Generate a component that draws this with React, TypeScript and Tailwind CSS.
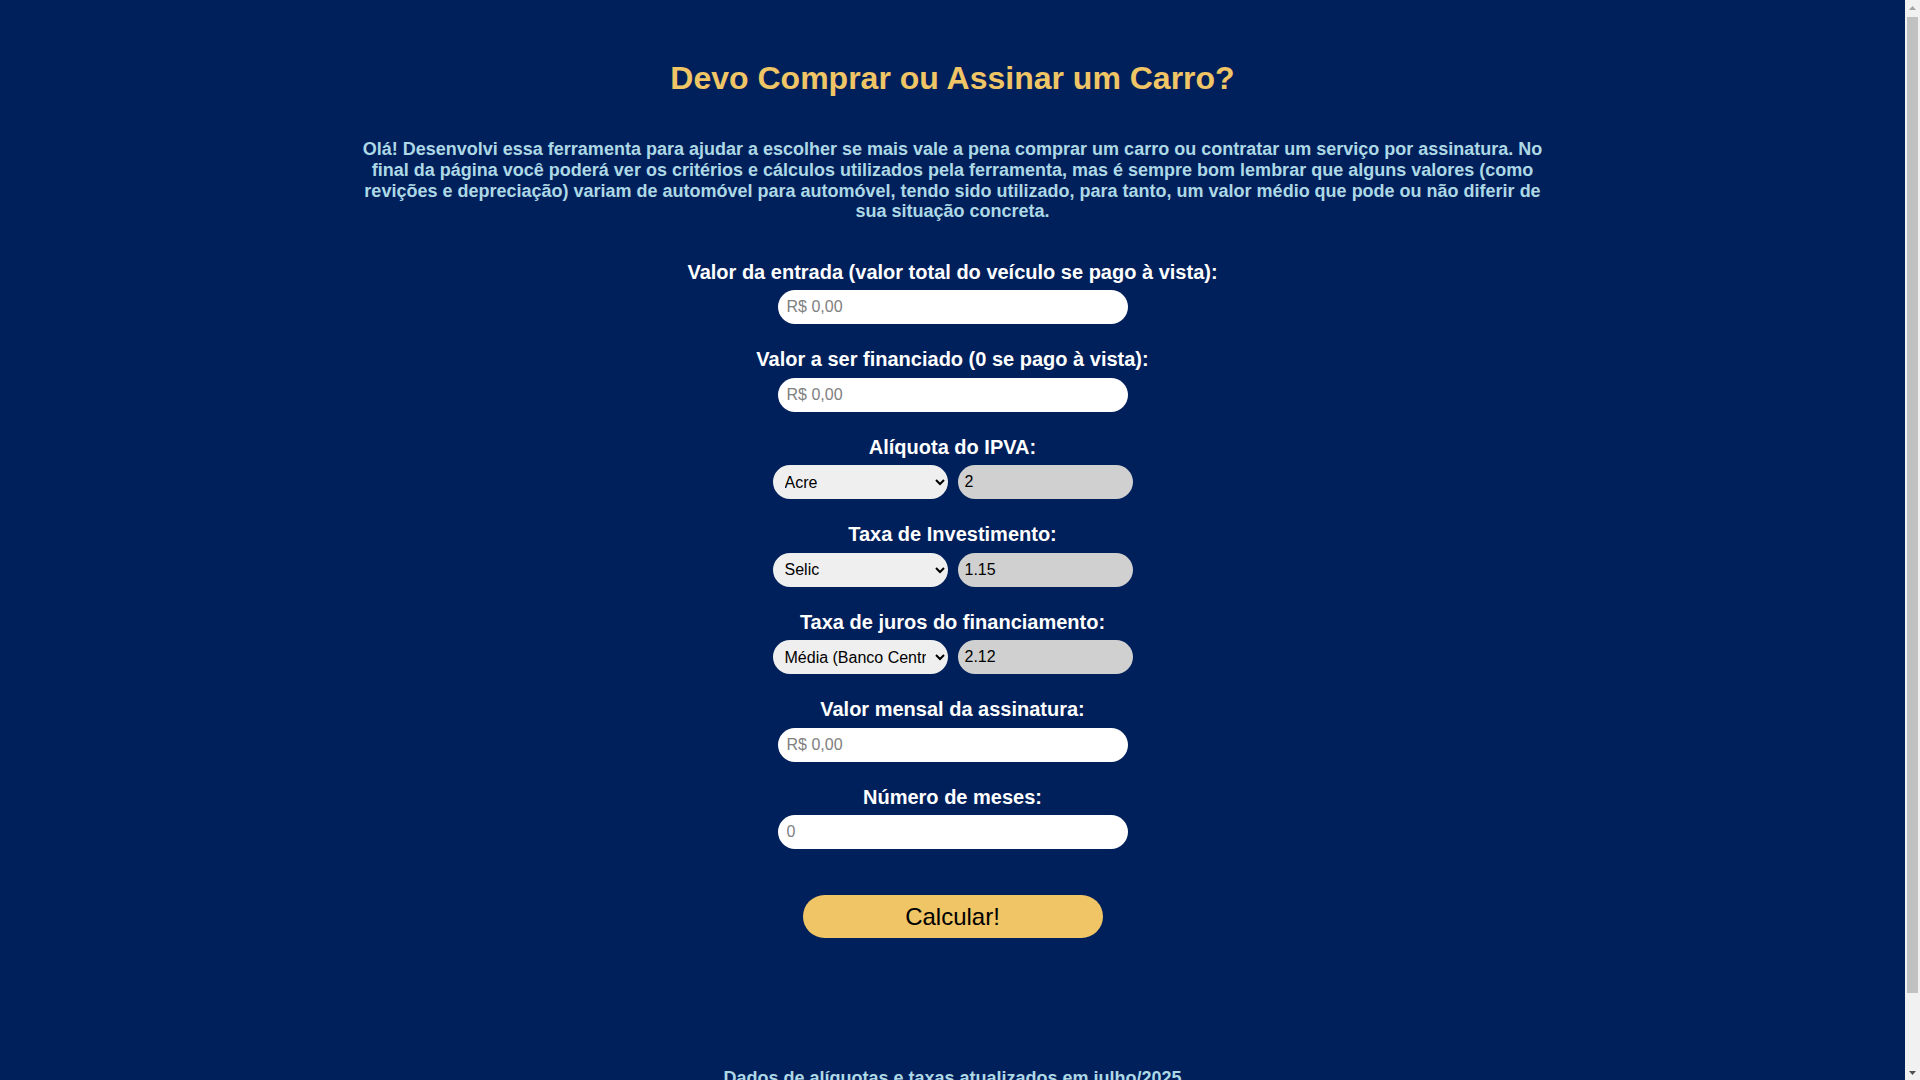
import React from 'react';

const estados = [
  'Acre', 'Alagoas', 'Amapá', 'Amazonas', 'Bahia', 'Ceará', 'Distrito Federal', 'Espírito Santo',
  'Goiás', 'Maranhão', 'Mato Grosso', 'Mato Grosso do Sul', 'Minas Gerais', 'Pará', 'Paraíba',
  'Paraná', 'Pernambuco', 'Piauí', 'Rio de Janeiro', 'Rio Grande do Norte', 'Rio Grande do Sul',
  'Rondônia', 'Roraima', 'Santa Catarina', 'São Paulo', 'Sergipe', 'Tocantins',
];

function Label({ children }: { children: React.ReactNode }) {
  return <label className="block text-[20px] font-bold leading-[23px] text-white">{children}</label>;
}

function TextField({ placeholder }: { placeholder: string }) {
  return (
    <input
      type="text"
      placeholder={placeholder}
      className="mt-[6.5px] h-[34px] w-[350px] rounded-full bg-white pl-[9px] text-[16px] text-black outline-none placeholder:text-[#808080]"
    />
  );
}

function SelectRow({ options, value }: { options: string[]; value: string }) {
  return (
    <div className="mt-[6.5px] flex justify-center gap-[10px]">
      <select
        defaultValue={options[0]}
        className="h-[34px] w-[175px] rounded-full bg-[#efefef] pl-[8px] pr-[6px] text-[16px] text-black outline-none"
      >
        {options.map((o) => (
          <option key={o}>{o}</option>
        ))}
      </select>
      <input
        type="text"
        readOnly
        value={value}
        className="h-[34px] w-[175px] rounded-full bg-[#d0d0d0] pl-[7px] text-[16px] text-black outline-none"
      />
    </div>
  );
}

// the window's classic scrollbar, as seen in the screenshot
function Scrollbar() {
  return (
    <aside className="sticky top-0 flex h-[1080px] w-[15px] shrink-0 flex-col bg-[#f1f1f1]">
      <div className="flex h-[15px] items-center justify-center">
        <svg width="7" height="4" viewBox="0 0 7 4">
          <path d="M0 4 L3.5 0 L7 4 Z" fill="#a3a3a3" />
        </svg>
      </div>
      <div className="mx-[2px] mt-[2px] h-[976px] bg-[#c1c1c1]" />
      <div className="flex-1" />
      <div className="flex h-[15px] items-center justify-center">
        <svg width="7" height="4" viewBox="0 0 7 4">
          <path d="M0 0 L3.5 4 L7 0 Z" fill="#505050" />
        </svg>
      </div>
    </aside>
  );
}

export default function App() {
  return (
    <div className="flex min-h-screen bg-[#00205b] font-['Liberation_Sans',Arial,sans-serif]">
      <main className="flex-1 pb-[72px]">
        <div className="mx-auto max-w-[1200px] pt-[60px] text-center">
          <h1 className="text-[32px] font-bold leading-[37px] text-[#efc566]">Devo Comprar ou Assinar um Carro?</h1>

          <p className="mt-[42px] text-[18px] font-bold leading-[20.8px] text-[#add8e6]">
            Olá! Desenvolvi essa ferramenta para ajudar a escolher se mais vale a pena comprar um carro ou contratar um
            serviço por assinatura. No final da página você poderá ver os critérios e cálculos utilizados pela
            ferramenta, mas é sempre bom lembrar que alguns valores (como revições e depreciação) variam de automóvel
            para automóvel, tendo sido utilizado, para tanto, um valor médio que pode ou não diferir de sua situação
            concreta.
          </p>

          <form className="mt-[38.5px] flex flex-col items-center gap-[24px]" onSubmit={(e) => e.preventDefault()}>
            <div>
              <Label>Valor da entrada (valor total do veículo se pago à vista):</Label>
              <TextField placeholder="R$ 0,00" />
            </div>
            <div>
              <Label>Valor a ser financiado (0 se pago à vista):</Label>
              <TextField placeholder="R$ 0,00" />
            </div>
            <div>
              <Label>Alíquota do IPVA:</Label>
              <SelectRow options={estados} value="2" />
            </div>
            <div>
              <Label>Taxa de Investimento:</Label>
              <SelectRow options={['Selic', 'CDI', 'Poupança', 'Personalizada']} value="1.15" />
            </div>
            <div>
              <Label>Taxa de juros do financiamento:</Label>
              <SelectRow options={['Média (Banco Central)', 'Personalizada']} value="2.12" />
            </div>
            <div>
              <Label>Valor mensal da assinatura:</Label>
              <TextField placeholder="R$ 0,00" />
            </div>
            <div>
              <Label>Número de meses:</Label>
              <TextField placeholder="0" />
            </div>

            <button
              type="submit"
              className="mt-[22px] h-[43px] w-[300px] rounded-full bg-[#efc566] text-[24px] leading-none text-black"
            >
              Calcular!
            </button>
          </form>

          <p className="mt-[130px] text-[18px] font-bold leading-[20.8px] text-[#add8e6]">
            Dados de alíquotas e taxas atualizados em julho/2025
          </p>
        </div>
      </main>
      <Scrollbar />
    </div>
  );
}
